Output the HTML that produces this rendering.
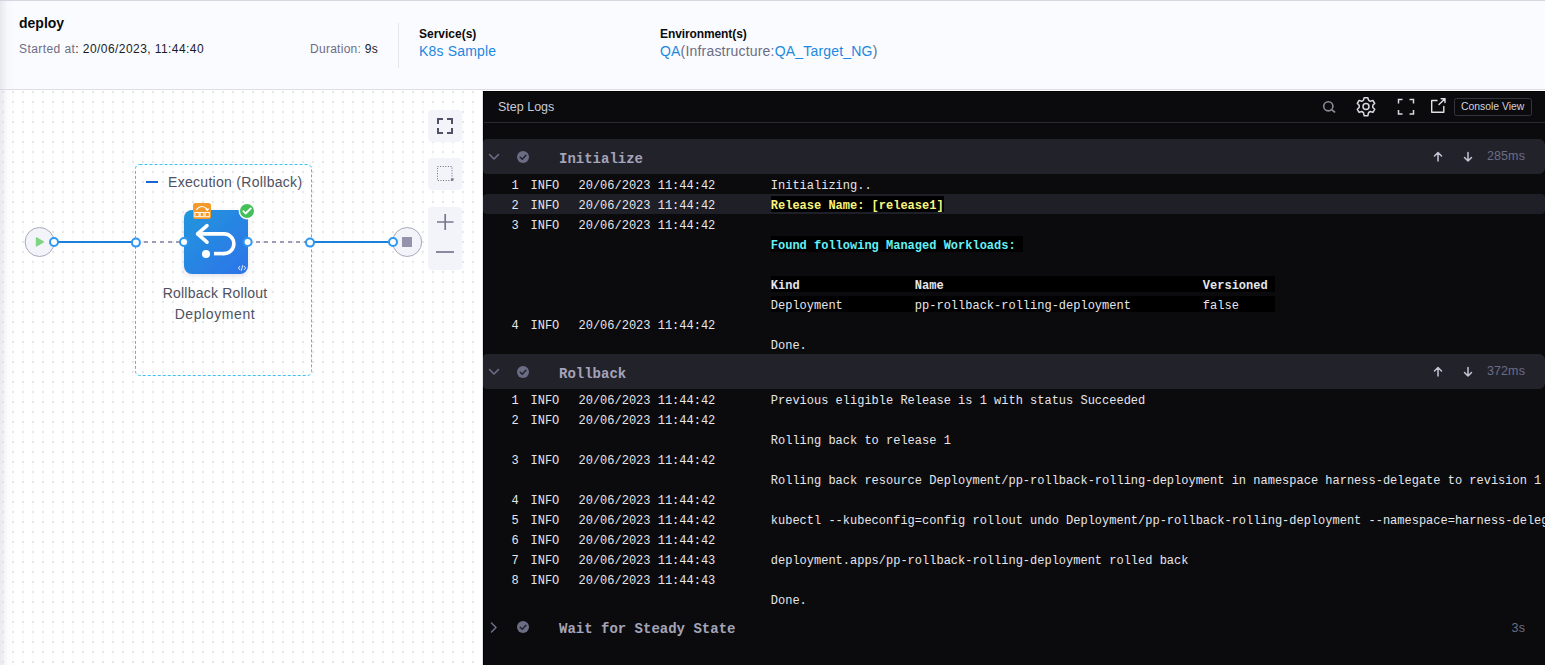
<!DOCTYPE html>
<html><head><meta charset="utf-8">
<style>
*{margin:0;padding:0;box-sizing:border-box}
html,body{width:1545px;height:665px;overflow:hidden;background:#fff;font-family:"Liberation Sans",sans-serif}
.abs{position:absolute}
#hdr{position:absolute;left:0;top:0;width:1545px;height:90px;background:#fafbfe;border-top:1px solid #d6d6e1;border-bottom:1px solid #dcdde6}
.t{position:absolute;white-space:pre;line-height:1}
#canvas{position:absolute;left:0;top:90px;width:482px;height:575px;background-color:#fff;
 background-image:linear-gradient(#fff 0,#fff 0),linear-gradient(#fff 0,#fff 0);background-image:radial-gradient(circle at 3px 2px,#e8e8eb 0,#e8e8eb 1px,transparent 1.2px),linear-gradient(90deg,transparent 2px,#fbfcfe 2px,#fbfcfe 4px,transparent 4px);
 background-size:10px 10px,10px 10px;background-position:0 0,0 0;overflow:hidden}
#shadow{position:absolute;left:0;top:0;width:14px;height:665px;background:linear-gradient(90deg,rgba(200,200,212,.38),rgba(220,220,230,.12) 50%,rgba(255,255,255,0))}
#cborder{position:absolute;left:482px;top:90px;width:1px;height:575px;background:#e4e5ec}
#logs{position:absolute;left:483px;top:91px;width:1062px;height:574px;background:#0b0b0d;border-left:1px solid #000;border-top:1px solid #000;overflow:hidden}
.lg{font-size:12px;line-height:20px;color:#e6e6eb;padding-top:1.5px}
.bk{background:#000;display:inline-block;vertical-align:top;height:16px;line-height:16px;margin-top:0.5px;padding-top:1.8px}
#logwrap{position:absolute;left:0;top:0;width:1545px;height:665px;overflow:hidden}
.mono{font-family:"Liberation Mono",monospace}
</style></head><body>
<div id="hdr">
<div class="t" style="left:19px;top:15px;font-size:14px;font-weight:bold;color:#0b0b0d">deploy</div>
<div class="t" style="left:19px;top:42px;font-size:12px;letter-spacing:0.43px;color:#6b6d85">Started at<span style="color:#1c1c28">: 20/06/2023, 11:44:40</span></div>
<div class="t" style="left:310px;top:42px;font-size:12px;letter-spacing:0.27px;color:#6b6d85">Duration: <span style="color:#1c1c28">9s</span></div>
<div class="abs" style="left:398px;top:22px;width:1px;height:45px;background:#e6e7ee"></div>
<div class="t" style="left:419px;top:27px;font-size:12px;font-weight:bold;color:#0b0b0d">Service(s)</div>
<div class="t" style="left:419px;top:43px;font-size:14px;letter-spacing:0.17px;color:#1c88e0">K8s Sample</div>
<div class="t" style="left:660px;top:27px;font-size:12px;font-weight:bold;letter-spacing:-0.1px;color:#0b0b0d">Environment(s)</div>
<div class="t" style="left:660px;top:43px;font-size:14px;letter-spacing:0.19px;color:#6b6d85"><span style="color:#1c88e0">QA</span>(Infrastructure:<span style="color:#1c88e0">QA_Target_NG</span>)</div>
</div>
<div id="canvas"></div>
<div id="shadow"></div>
<div id="cborder"></div>
<svg class="abs" style="left:0;top:0" width="482" height="665" viewBox="0 0 482 665">
<defs>
<linearGradient id="ng" x1="0" y1="0" x2="1" y2="1"><stop offset="0" stop-color="#2297dc"/><stop offset="1" stop-color="#2e73ea"/></linearGradient>
<filter id="sh" x="-30%" y="-30%" width="160%" height="160%"><feDropShadow dx="0" dy="2" stdDeviation="2.5" flood-color="#606080" flood-opacity="0.18"/></filter>
</defs>
<!-- group box -->
<rect x="135.5" y="164.5" width="176" height="211" rx="4" ry="4" fill="none" stroke="#3dc0f4" stroke-width="1" stroke-dasharray="3 2"/>
<rect x="146" y="181" width="12" height="2" fill="#1a64d6"/>
<!-- lines -->
<rect x="54" y="241" width="82" height="2" fill="#1a80d9"/>
<rect x="310" y="241" width="83" height="2" fill="#1a80d9"/>
<line x1="144" y1="242" x2="184" y2="242" stroke="#9e9db5" stroke-width="2" stroke-dasharray="4 4"/>
<line x1="256" y1="242" x2="306" y2="242" stroke="#9e9db5" stroke-width="2" stroke-dasharray="4 4"/>
<!-- start / end -->
<circle cx="39.6" cy="242" r="14.5" fill="#f3f3fa" stroke="#aaa8bc" stroke-width="1"/>
<path d="M36.3 237.6 L43.8 241.9 L36.3 246.3 Z" fill="#7dd47f" stroke="#7dd47f" stroke-width="1" stroke-linejoin="round"/>
<circle cx="407.2" cy="242" r="14.5" fill="#f3f3fa" stroke="#aaa8bc" stroke-width="1"/>
<rect x="402" y="237" width="10" height="10" fill="#9394ab"/>
<!-- node -->
<rect x="184" y="210" width="64" height="64" rx="8" ry="8" fill="url(#ng)" filter="url(#sh)"/>
<g fill="none" stroke="#fff" stroke-width="3.6" stroke-linecap="round" stroke-linejoin="round">
<path d="M207 225.6 L197.6 233.9 L207 242.2"/>
<path d="M198 233.9 H224 A9.85 9.85 0 0 1 224 253.6"/>
</g>
<path d="M224 253.6 H214" stroke="#fff" stroke-width="3.6" fill="none"/>
<circle cx="206" cy="254" r="4" fill="#fff"/>
<g fill="none" stroke="#fff" stroke-width="1" opacity="0.85" stroke-linecap="round">
<path d="M239.8 266.3 L238.4 268 L239.8 269.7"/><path d="M244.2 266.3 L245.6 268 L244.2 269.7"/><path d="M242.7 265.5 L241.3 270.5"/>
</g>
<!-- ports -->
<g fill="#fff" stroke="#2d97f2" stroke-width="2">
<circle cx="54" cy="242" r="4"/><circle cx="135.9" cy="242.6" r="4"/><circle cx="184" cy="242" r="4"/><circle cx="247.6" cy="242" r="4"/><circle cx="310" cy="242.6" r="4"/><circle cx="393" cy="242" r="4"/>
</g>
<!-- orange badge -->
<rect x="193" y="203" width="18" height="16" rx="2.5" fill="#f49a2a"/>
<g fill="none" stroke="#fff" stroke-width="1.2" stroke-linecap="round">
<path d="M196.6 209.4 Q201.5 203.8 207 209" />
</g>
<g fill="none" stroke="#fff" stroke-width="1">
<rect x="194.9" y="212.5" width="4.2" height="4.2"/><rect x="200.1" y="212.5" width="3.8" height="4.2"/><rect x="205.1" y="212.5" width="4.2" height="4.2"/>
</g>
<path d="M205.3 209.6 L209.4 208.2 L207.6 211.2 Z" fill="#fff"/>
<!-- success badge -->
<circle cx="247" cy="211" r="8.4" fill="#fff"/>
<circle cx="247" cy="211" r="7" fill="#44c05a"/>
<path d="M243.3 211.1 L245.6 213.5 L250.8 208.4" fill="none" stroke="#fff" stroke-width="1.8" stroke-linecap="round" stroke-linejoin="round"/>
<!-- controls -->
<rect x="428" y="110" width="34" height="32" rx="4" fill="#f3f3fa"/>
<rect x="428" y="158" width="34" height="32" rx="4" fill="#f3f3fa"/>
<rect x="428" y="207" width="34" height="63" rx="4" fill="#f3f3fa"/>
<g fill="none" stroke="#4f5164" stroke-width="2">
<path d="M438 124 V119 H443"/><path d="M447 119 H452 V124"/><path d="M438 128 V133 H443"/><path d="M447 133 H452 V128"/>
</g>
<rect x="437.5" y="166.5" width="14.5" height="14" fill="none" stroke="#6b6d85" stroke-width="1" stroke-dasharray="1 1.6"/>
<path d="M450.5 179 l2.5 2.2 l0.8-3 z" fill="#6b6d85"/>
<g stroke="#77788e" stroke-width="1.7" fill="none">
<path d="M437 222 H453.5 M445.2 214 V230"/>
<path d="M436 252 H454"/>
</g>
</svg>
<div class="t" style="left:168px;top:175px;font-size:14px;letter-spacing:0.3px;color:#4f5162">Execution (Rollback)</div>
<div class="t" style="left:160px;top:286px;width:110px;text-align:center;font-size:14px;line-height:21px;letter-spacing:0.22px;color:#4f5162;top:283px">Rollback Rollout<br><span style="letter-spacing:0.6px">Deployment</span></div>

<div id="logs"></div>
<div id="logwrap">
<div class="t" style="left:498px;top:101px;font-size:12.5px;color:#c9cad8">Step Logs</div>

<svg class="abs" style="left:1310px;top:92px" width="235" height="30" viewBox="1310 92 235 30">
<g fill="none" stroke="#8a8a96" stroke-width="1.6" stroke-linecap="round"><circle cx="1328.3" cy="106.3" r="4.6"/><path d="M1331.8 109.8 L1334.6 112"/></g>
<g fill="none" stroke="#d8d8de" stroke-width="1.5" stroke-linejoin="round">
<path d="M1364.2 97.8 L1367.8 97.8 L1368.6 100.3 L1370.4 101.3 L1372.9 100.4 L1374.7 103.5 L1372.8 105.3 L1372.8 107.5 L1374.7 109.3 L1372.9 112.4 L1370.4 111.5 L1368.6 112.5 L1367.8 115.8 L1364.2 115.8 L1363.4 112.5 L1361.6 111.5 L1359.1 112.4 L1357.3 109.3 L1359.2 107.5 L1359.2 105.3 L1357.3 103.5 L1359.1 100.4 L1361.6 101.3 L1363.4 100.3 Z"/>
<circle cx="1366" cy="106.6" r="3"/>
</g>
<g fill="none" stroke="#d8d8de" stroke-width="1.5">
<path d="M1398.5 103.5 V99.5 H1402.5"/><path d="M1409.5 99.5 H1413.5 V103.5"/><path d="M1398.5 110 V114 H1402.5"/><path d="M1409.5 114 H1413.5 V110"/>
</g>
<g fill="none" stroke="#e0e0e6" stroke-width="1.4" stroke-linecap="round" stroke-linejoin="round">
<path d="M1437 100.5 H1431.7 V112.2 H1443.8 V106.5"/><path d="M1439 104.5 L1445 98.8 M1441.2 98.8 H1445 V102.6"/>
</g>
<rect x="1454.5" y="98.5" width="77" height="17" rx="2" fill="none" stroke="#34343e" stroke-width="1"/>
</svg>
<div class="t" style="left:1461px;top:102px;font-size:10.4px;color:#d2d2de">Console View</div>
<div class="abs" style="left:484px;top:122px;width:1061px;height:1px;background:#2a2a33"></div>
<div class="abs" style="left:483px;top:139px;width:1062px;height:35px;background:#22222b;border-radius:4px 6px 6px 4px"></div>
<svg class="abs" style="left:0;top:0px" width="560" height="200" viewBox="0 0 560 200"><path d="M489.5 154.5 L494 159 L498.5 154.5" fill="none" stroke="#6b6d85" stroke-width="1.6" stroke-linecap="round" stroke-linejoin="round"/><circle cx="523" cy="157" r="6" fill="#6b6d85"/><path d="M520.2 157.2 L522.3 159.2 L525.9 155.3" fill="none" stroke="#22222b" stroke-width="1.5" stroke-linecap="round" stroke-linejoin="round"/></svg>
<div class="t mono" style="left:559px;top:149px;font-size:14px;font-weight:bold;color:#a4a4b8;margin-top:2.5px">Initialize</div>
<svg class="abs" style="left:1428px;top:149px" width="50" height="16" viewBox="0 0 50 16"><g fill="none" stroke="#c4c4d4" stroke-width="1.5" stroke-linecap="round" stroke-linejoin="round"><path d="M10 3.5 V12 M6.5 7 L10 3.5 L13.5 7"/><path d="M40 3.5 V12 M36.5 8.5 L40 12 L43.5 8.5"/></g></svg>
<div class="t" style="right:20px;top:150px;font-size:12.5px;letter-spacing:0.1px;color:#6b6d85">285ms</div>
<div class="t mono lg" style="left:511.5px;top:174px">1</div><div class="t mono lg" style="left:530.5px;top:174px">INFO</div><div class="t mono lg" style="left:578.5px;top:174px">20/06/2023 11:44:42</div>
<div class="t mono lg" style="left:770.8px;top:174px">Initializing..</div>
<div class="abs" style="left:483px;top:194px;width:1062px;height:20px;background:#1f1f27;border-radius:4px"></div>
<div class="t mono lg" style="left:511.5px;top:194px">2</div><div class="t mono lg" style="left:530.5px;top:194px">INFO</div><div class="t mono lg" style="left:578.5px;top:194px">20/06/2023 11:44:42</div>
<div class="t mono lg" style="left:770.8px;top:194px"><span class="bk" style="color:#f8f57d;font-weight:bold">Release Name: [release1]</span></div>
<div class="t mono lg" style="left:511.5px;top:214px">3</div><div class="t mono lg" style="left:530.5px;top:214px">INFO</div><div class="t mono lg" style="left:578.5px;top:214px">20/06/2023 11:44:42</div>
<div class="t mono lg" style="left:770.8px;top:234px"><span class="bk" style="color:#64f0f6;font-weight:bold">Found following Managed Workloads: </span></div>
<div class="t mono lg" style="left:770.8px;top:274px"><span class="bk" style="font-weight:bold">Kind                Name                                    Versioned </span></div>
<div class="t mono lg" style="left:770.8px;top:294px"><span class="bk">Deployment          pp-rollback-rolling-deployment          false     </span></div>
<div class="t mono lg" style="left:511.5px;top:314px">4</div><div class="t mono lg" style="left:530.5px;top:314px">INFO</div><div class="t mono lg" style="left:578.5px;top:314px">20/06/2023 11:44:42</div>
<div class="t mono lg" style="left:770.8px;top:334px">Done.</div>
<div class="abs" style="left:483px;top:354px;width:1062px;height:35px;background:#22222b;border-radius:4px 6px 6px 4px"></div>
<svg class="abs" style="left:0;top:215px" width="560" height="200" viewBox="0 0 560 200"><path d="M489.5 154.5 L494 159 L498.5 154.5" fill="none" stroke="#6b6d85" stroke-width="1.6" stroke-linecap="round" stroke-linejoin="round"/><circle cx="523" cy="157" r="6" fill="#6b6d85"/><path d="M520.2 157.2 L522.3 159.2 L525.9 155.3" fill="none" stroke="#22222b" stroke-width="1.5" stroke-linecap="round" stroke-linejoin="round"/></svg>
<div class="t mono" style="left:559px;top:364px;font-size:14px;font-weight:bold;color:#a4a4b8;margin-top:2.5px">Rollback</div>
<svg class="abs" style="left:1428px;top:364px" width="50" height="16" viewBox="0 0 50 16"><g fill="none" stroke="#c4c4d4" stroke-width="1.5" stroke-linecap="round" stroke-linejoin="round"><path d="M10 3.5 V12 M6.5 7 L10 3.5 L13.5 7"/><path d="M40 3.5 V12 M36.5 8.5 L40 12 L43.5 8.5"/></g></svg>
<div class="t" style="right:20px;top:365px;font-size:12.5px;letter-spacing:0.1px;color:#6b6d85">372ms</div>
<div class="t mono lg" style="left:511.5px;top:389px">1</div><div class="t mono lg" style="left:530.5px;top:389px">INFO</div><div class="t mono lg" style="left:578.5px;top:389px">20/06/2023 11:44:42</div>
<div class="t mono lg" style="left:770.8px;top:389px">Previous eligible Release is 1 with status Succeeded</div>
<div class="t mono lg" style="left:511.5px;top:409px">2</div><div class="t mono lg" style="left:530.5px;top:409px">INFO</div><div class="t mono lg" style="left:578.5px;top:409px">20/06/2023 11:44:42</div>
<div class="t mono lg" style="left:770.8px;top:429px">Rolling back to release 1</div>
<div class="t mono lg" style="left:511.5px;top:449px">3</div><div class="t mono lg" style="left:530.5px;top:449px">INFO</div><div class="t mono lg" style="left:578.5px;top:449px">20/06/2023 11:44:42</div>
<div class="t mono lg" style="left:770.8px;top:469px">Rolling back resource Deployment/pp-rollback-rolling-deployment in namespace harness-delegate to revision 1</div>
<div class="t mono lg" style="left:511.5px;top:489px">4</div><div class="t mono lg" style="left:530.5px;top:489px">INFO</div><div class="t mono lg" style="left:578.5px;top:489px">20/06/2023 11:44:42</div>
<div class="t mono lg" style="left:511.5px;top:509px">5</div><div class="t mono lg" style="left:530.5px;top:509px">INFO</div><div class="t mono lg" style="left:578.5px;top:509px">20/06/2023 11:44:42</div>
<div class="t mono lg" style="left:770.8px;top:509px">kubectl --kubeconfig=config rollout undo Deployment/pp-rollback-rolling-deployment --namespace=harness-delegate</div>
<div class="t mono lg" style="left:511.5px;top:529px">6</div><div class="t mono lg" style="left:530.5px;top:529px">INFO</div><div class="t mono lg" style="left:578.5px;top:529px">20/06/2023 11:44:42</div>
<div class="t mono lg" style="left:511.5px;top:549px">7</div><div class="t mono lg" style="left:530.5px;top:549px">INFO</div><div class="t mono lg" style="left:578.5px;top:549px">20/06/2023 11:44:43</div>
<div class="t mono lg" style="left:770.8px;top:549px">deployment.apps/pp-rollback-rolling-deployment rolled back</div>
<div class="t mono lg" style="left:511.5px;top:569px">8</div><div class="t mono lg" style="left:530.5px;top:569px">INFO</div><div class="t mono lg" style="left:578.5px;top:569px">20/06/2023 11:44:43</div>
<div class="t mono lg" style="left:770.8px;top:589px">Done.</div>
<svg class="abs" style="left:0;top:470px" width="560" height="200" viewBox="0 0 560 200"><path d="M491.5 153 L496 157.5 L491.5 162" fill="none" stroke="#6b6d85" stroke-width="1.6" stroke-linecap="round" stroke-linejoin="round"/><circle cx="523" cy="157" r="6" fill="#6b6d85"/><path d="M520.2 157.2 L522.3 159.2 L525.9 155.3" fill="none" stroke="#22222b" stroke-width="1.5" stroke-linecap="round" stroke-linejoin="round"/></svg>
<div class="t mono" style="left:559px;top:619px;font-size:14px;font-weight:bold;color:#a4a4b8;margin-top:2.5px">Wait for Steady State</div>
<div class="t" style="right:20px;top:622px;font-size:12.5px;letter-spacing:0.1px;color:#6b6d85">3s</div>
</div>

</body></html>
